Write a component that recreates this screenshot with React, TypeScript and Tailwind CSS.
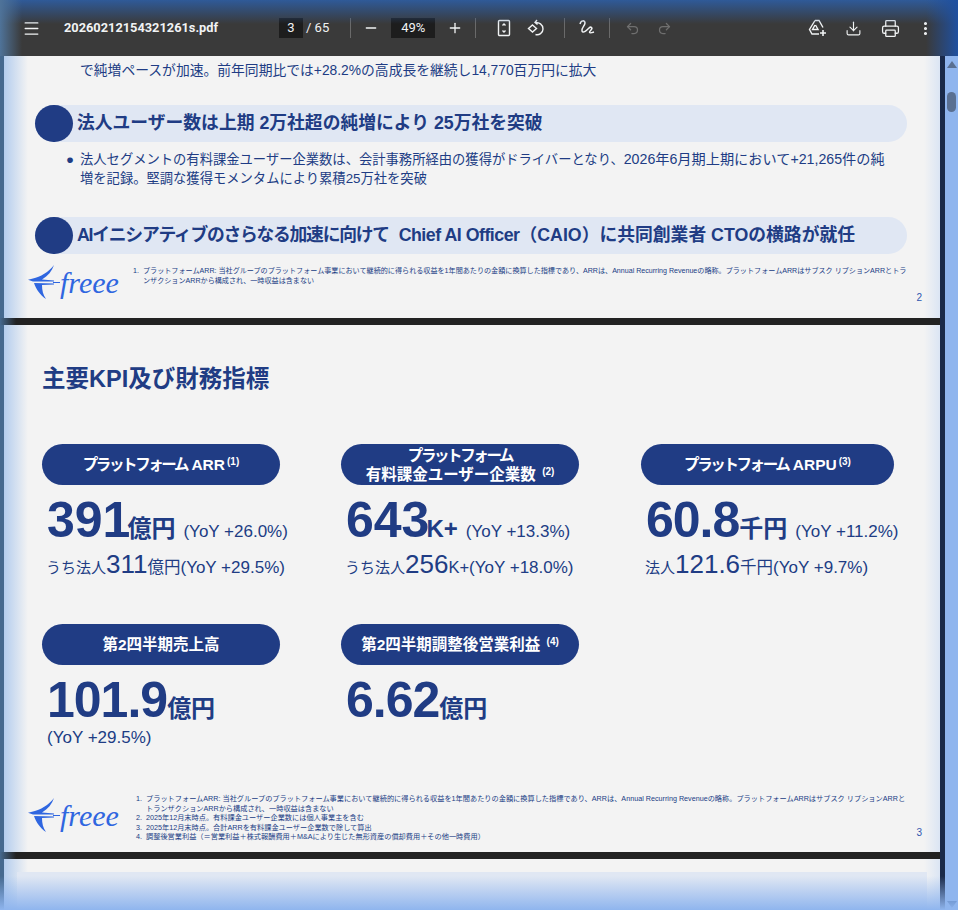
import React from 'react';
import { Download, Ellipsis, Menu, Minus, Plus, Printer, Redo2, Undo2 } from 'lucide-react';

const FONT = "font-['Liberation_Sans','Noto_Sans_CJK_JP',sans-serif]";
const PAGE_BG =
  'bg-[linear-gradient(to_right,#b4cdee,#f3f3f3_24px,#f3f3f3_calc(100%-16px),#dbe5f4)]';

const Bird: React.FC = () => (
  <svg width="32" height="36" viewBox="0 0 32 36" fill="#2f66e0" className="shrink-0">
    <path d="M26 0 C24 6 20 11 14 14.500 L26 15.500 L26 16.500 L5 16.500 L0 14.700 L5 13.500 C12 12 21 7 26 0 Z" />
    <path d="M6 18 L26 18.500 L26 19.500 L14 20 C14 25 15 30 18 34 C12 30 8 24 6 18 Z" />
    <path d="M25 17 L32 17 L32 18 L25 18 Z" />
  </svg>
);

const Logo: React.FC = () => (
  <div className="flex items-center w-[92px] h-[36px] shrink-0 whitespace-nowrap">
    <Bird />
    <span className="font-['Liberation_Serif',serif] italic text-[30px] leading-[36px] text-[#2f66e0]">freee</span>
  </div>
);

const Toolbar: React.FC = () => (
  <div className="relative z-10 h-[56px] shrink-0 bg-[#3a3a3a] flex items-center text-[#f1f3f4]">
    <Menu size={19} className="ml-[22px]" strokeWidth={1.6} />
    <span className="ml-[23px] text-[12.800px] font-bold w-[215px] font-['Roboto',sans-serif]">
      20260212154321261s.pdf
    </span>
    <span className="w-[24px] h-[20px] bg-[#1d1d1d] text-[13px] flex items-center justify-center font-['Roboto',sans-serif]">
      3
    </span>
    <span className="ml-[3px] text-[13px] font-['Roboto',sans-serif]">/ 65</span>
    <div className="ml-[21px] w-px h-[20px] bg-[#6a6a6a]" />
    <Minus size={16} className="ml-[12px]" />
    <span className="ml-[12px] w-[44px] h-[20px] bg-[#1d1d1d] text-[13px] flex items-center justify-center font-['Roboto',sans-serif]">
      49%
    </span>
    <Plus size={16} className="ml-[12px]" />
    <div className="ml-[12px] w-px h-[20px] bg-[#6a6a6a]" />
    <svg width="16" height="18" viewBox="0 0 16 18" className="ml-[20px]" fill="none" stroke="#f1f3f4" strokeWidth="1.4">
      <rect x="2.500" y="1.500" width="11" height="15" rx="1" />
      <path d="M6.500 6.500 L8 5 L9.500 6.500 M6.500 11.500 L8 13 L9.500 11.500" />
    </svg>
    <svg width="18" height="18" viewBox="0 0 18 18" className="ml-[15px]" fill="none" stroke="#f1f3f4" strokeWidth="1.4">
      <path d="M5.500 6 L9.500 9.500 L5.500 13 L1.500 9.500 Z" />
      <path d="M8 3.500 C12 3 16 5.500 16 10 C16 14 12 16.500 8.500 15.500 M10 1 L8 3.500 L10.500 5.500" />
    </svg>
    <div className="ml-[19px] w-px h-[20px] bg-[#6a6a6a]" />
    <svg width="18" height="18" viewBox="0 0 18 18" className="ml-[13px]" fill="none" stroke="#f1f3f4" strokeWidth="1.5">
      <path d="M2 5 C3 1 7 1 7 4 C7 7 3 9 4 12 C5 15 9 11 11 9 C13 7 15 9 13 11 C11 13 10 15 16 13" />
    </svg>
    <div className="ml-[13px] w-px h-[20px] bg-[#6a6a6a]" />
    <Undo2 size={15} className="ml-[15px] text-[#6f6f6f]" />
    <Redo2 size={15} className="ml-[17px] text-[#6f6f6f]" />
    <svg width="20" height="18" viewBox="0 0 20 18" className="ml-[136px]" fill="none" stroke="#f1f3f4" strokeWidth="1.4">
      <path d="M7 1.500 L11 1.500 L15 8.500 M7 1.500 L1.500 10.500 L4 15 L11 15 M7 6 L4.500 10.500 L10 10.500 L7.500 6" />
      <path d="M15 11 L15 17 M12 14 L18 14" strokeWidth="1.6" />
    </svg>
    <Download size={17} className="ml-[17px]" strokeWidth={1.6} />
    <Printer size={19} className="ml-[19px]" strokeWidth={1.6} />
    <Ellipsis size={17} className="ml-[17px] rotate-90" strokeWidth={2.4} />
  </div>
);

const Heading: React.FC<{ children: React.ReactNode }> = ({ children }) => (
  <div className="ml-[31px] mr-[33px] h-[37px] flex items-center rounded-full bg-[#e0e7f3]">
    <div className="w-[38px] h-[37px] rounded-full bg-[#203c84] shrink-0" />
    <span className="ml-[4px] text-[17.8px] font-bold text-[#203c84] whitespace-nowrap">{children}</span>
  </div>
);

const Pill: React.FC<{ w: string; children: React.ReactNode }> = ({ w, children }) => (
  <div className={`${w} h-[41px] rounded-full bg-[#203c84] text-white font-bold text-[15.5px] leading-[19px] flex items-center justify-center text-center`}>
    <span>{children}</span>
  </div>
);

const Kana: React.FC<{ children: React.ReactNode }> = ({ children }) => (
  <span className="tracking-[-2.4px]">{children}</span>
);

const Sup: React.FC<{ children: React.ReactNode }> = ({ children }) => (
  <sup className="text-[10px] font-bold ml-[2px] -top-[5px]">{children}</sup>
);

interface IKpi {
  value: string;
  unit: string;
  yoy?: string;
  yoyBelow?: string;
  subLabel?: string;
  subValue?: string;
  subUnit?: string;
  subYoy?: string;
}

const Kpi: React.FC<IKpi> = ({ value, unit, yoy, yoyBelow, subLabel, subValue, subUnit, subYoy }) => {
  // the decimal point sits tighter in the slide's font
  const dotted = value.includes('.');
  return (
    <div className="text-[#203c84] pl-[5px] mt-[10px]">
      <div className="flex items-baseline h-[50px] whitespace-nowrap">
        <span className={`text-[50px] leading-[50px] font-bold ${dotted ? 'tracking-[-1px]' : ''}`}>{value}</span>
        <span className={`text-[24px] font-bold ${dotted ? '' : '-ml-[3px]'}`}>{unit}</span>
        {yoy && <span className="ml-[8px] text-[17px]">{yoy}</span>}
      </div>
      {yoyBelow && <div className="mt-[3px] text-[17px] leading-[20px]">{yoyBelow}</div>}
      {subValue && (
        <div className="flex items-baseline h-[30px] whitespace-nowrap text-[17px]">
          <span className="text-[15px] -ml-[1px]">{subLabel}</span>
          <span className="text-[26px]">{subValue}</span>
          <span className="text-[16.500px]">{subUnit}</span>
          <span>{subYoy}</span>
        </div>
      )}
    </div>
  );
};

const Gap: React.FC = () => (
  <div className="h-[7px] shrink-0 -ml-[4px] bg-[linear-gradient(to_right,#45698f,#222222_16px)]" />
);

const Page2: React.FC = () => (
  <div className={`h-[262px] shrink-0 ${PAGE_BG}`}>
    <p className="ml-[76px] pt-[6px] h-[49px] text-[13.8px] leading-[18px] text-[#203c84] whitespace-nowrap">
      で純増ペースが加速。前年同期比では+28.2%の高成長を継続し14,770百万円に拡大
    </p>
    <Heading>法人ユーザー数は上期 2万社超の純増により 25万社を突破</Heading>
    <div className="flex mt-[8px] ml-[62px] h-[67px] text-[13.3px] leading-[19px] text-[#203c84] whitespace-nowrap">
      <span className="w-[14px] shrink-0">●</span>
      <p>
        法人セグメントの有料課金ユーザー企業数は、会計事務所経由の獲得がドライバーとなり、
        <span className="text-[14.200px]">2026年6月期上期において+21,265件の純</span>
        <br />
        増を記録。堅調な獲得モメンタムにより累積25万社を突破
      </p>
    </div>
    <Heading>
      <span className="tracking-[-1.25px]">AIイニシアティブのさらなる加速に向けて</span>
      &nbsp; <span className="tracking-[-0.5px]">Chief AI Officer</span>（CAIO）に共同創業者 CTOの横路が就任
    </Heading>
    <div className="flex items-start ml-[24px] mt-[11px] relative">
      <Logo />
      <div className="ml-[13px] mt-[1px] w-[775px] text-[7.1px] leading-[10px] text-[#203c84] flex">
        <span className="w-[10px] shrink-0">1.</span>
        <p>
          プラットフォームARR: 当社グループのプラットフォーム事業において継続的に得られる収益を1年間あたりの金額に換算した指標であり、ARRは、Annual Recurring Revenueの略称。プラットフォームARRはサブスク リプションARRとトランザクションARRから構成され、一時収益は含まない
        </p>
      </div>
      <span className="absolute right-[18px] top-[25px] text-[10px] text-[#3056b0]">2</span>
    </div>
  </div>
);

const Page3: React.FC = () => (
  <div className={`h-[527px] shrink-0 pl-[38px] relative ${PAGE_BG}`}>
    <h2 className="pt-[39px] h-[119px] text-[23.500px] leading-[30px] font-bold text-[#203c84]">主要KPI及び財務指標</h2>
    <div className="grid grid-cols-[299px_300px_1fr] h-[180px]">
      <div>
        <Pill w="w-[238px]">
          <Kana>プラットフォーム</Kana> ARR<Sup>(1)</Sup>
        </Pill>
        <Kpi value="391" unit="億円" yoy="(YoY +26.0%)" subLabel="うち法人" subValue="311" subUnit="億円" subYoy="(YoY +29.5%)" />
      </div>
      <div>
        <Pill w="w-[238px]">
          <span className="block">
            <Kana>プラットフォーム</Kana>
          </span>
          <span className="block">
            有料課金ユーザー企業数 <Sup>(2)</Sup>
          </span>
        </Pill>
        <Kpi value="643" unit="K+" yoy="(YoY +13.3%)" subLabel="うち法人" subValue="256" subUnit="K+" subYoy="(YoY +18.0%)" />
      </div>
      <div>
        <Pill w="w-[253px]">
          <Kana>プラットフォーム</Kana> ARPU<Sup>(3)</Sup>
        </Pill>
        <Kpi value="60.8" unit="千円" yoy="(YoY +11.2%)" subLabel="法人" subValue="121.6" subUnit="千円" subYoy="(YoY +9.7%)" />
      </div>
    </div>
    <div className="grid grid-cols-[299px_300px_1fr] h-[165px]">
      <div>
        <Pill w="w-[238px]">第2四半期売上高</Pill>
        <Kpi value="101.9" unit="億円" yoyBelow="(YoY +29.5%)" />
      </div>
      <div>
        <Pill w="w-[238px]">
          第2四半期調整後営業利益 <Sup>(4)</Sup>
        </Pill>
        <Kpi value="6.62" unit="億円" />
      </div>
    </div>
    <div className="flex items-start -ml-[14px]">
      <div className="mt-[9px]">
        <Logo />
      </div>
      <div className="ml-[16px] mt-[5px] w-[770px] text-[7.2px] leading-[9.500px] text-[#203c84]">
        <div className="flex">
          <span className="w-[10px] shrink-0">1.</span>
          <p>
            プラットフォームARR: 当社グループのプラットフォーム事業において継続的に得られる収益を1年間あたりの金額に換算した指標であり、ARRは、Annual Recurring Revenueの略称。プラットフォームARRはサブスク リプションARRとトランザクションARRから構成され、一時収益は含まない
          </p>
        </div>
        <div className="flex">
          <span className="w-[10px] shrink-0">2.</span>
          <p>2025年12月末時点。有料課金ユーザー企業数には個人事業主を含む</p>
        </div>
        <div className="flex">
          <span className="w-[10px] shrink-0">3.</span>
          <p>2025年12月末時点。合計ARRを有料課金ユーザー企業数で除して算出</p>
        </div>
        <div className="flex">
          <span className="w-[10px] shrink-0">4.</span>
          <p>調整後営業利益（＝営業利益＋株式報酬費用＋M&Aにより生じた無形資産の償却費用＋その他一時費用）</p>
        </div>
      </div>
    </div>
    <span className="absolute right-[18px] top-[500px] text-[10px] text-[#3056b0]">3</span>
  </div>
);

const Page4: React.FC = () => (
  <div className={`flex-1 px-[13px] pt-[13px] ${PAGE_BG}`}>
    <div className="h-full bg-[#e0e7f3]" />
  </div>
);

const Scrollbar: React.FC = () => (
  <div className="w-[13px] h-full bg-[#8fb5ee] flex flex-col items-center pt-[5px]">
    <svg width="10" height="8" viewBox="0 0 10 8" fill="#5a7092">
      <path d="M5 0 L10 7 L0 7 Z" />
    </svg>
    <div className="mt-[23px] w-[9px] h-[20px] rounded-full bg-[#5a7092]" />
    <div className="flex-1" />
    <svg width="10" height="8" viewBox="0 0 10 8" className="mb-[2px]" fill="#2c5590">
      <path d="M5 8 L10 1 L0 1 Z" />
    </svg>
  </div>
);

export default function App() {
  return (
    <div className={`${FONT} relative w-[958px] h-[910px] overflow-hidden flex flex-col bg-[#3a3a3a]`}>
      <Toolbar />
      <div className="flex flex-1 min-h-0">
        <div className="w-[940px] flex flex-col pl-[4px] bg-[#45698f]">
          <Page2 />
          <Gap />
          <Page3 />
          <Gap />
          <Page4 />
        </div>
        <div className="w-[5px] bg-[#1a2a4a]" />
        <Scrollbar />
      </div>
      {/* window glow over everything */}
      <div className="absolute z-20 left-0 right-0 bottom-0 h-[34px] bg-gradient-to-t from-[#8fb5ee] to-transparent pointer-events-none" />
      <div className="absolute z-20 left-0 right-0 top-0 h-[24px] bg-gradient-to-b from-[#2f5a98] to-transparent pointer-events-none" />
      <div className="absolute z-20 left-0 top-0 h-[56px] w-[22px] bg-gradient-to-r from-[#4f7399] to-transparent pointer-events-none" />
      <div className="absolute z-20 right-0 top-0 h-[56px] w-[32px] bg-gradient-to-l from-[#1f50a0] to-transparent pointer-events-none" />
    </div>
  );
}
